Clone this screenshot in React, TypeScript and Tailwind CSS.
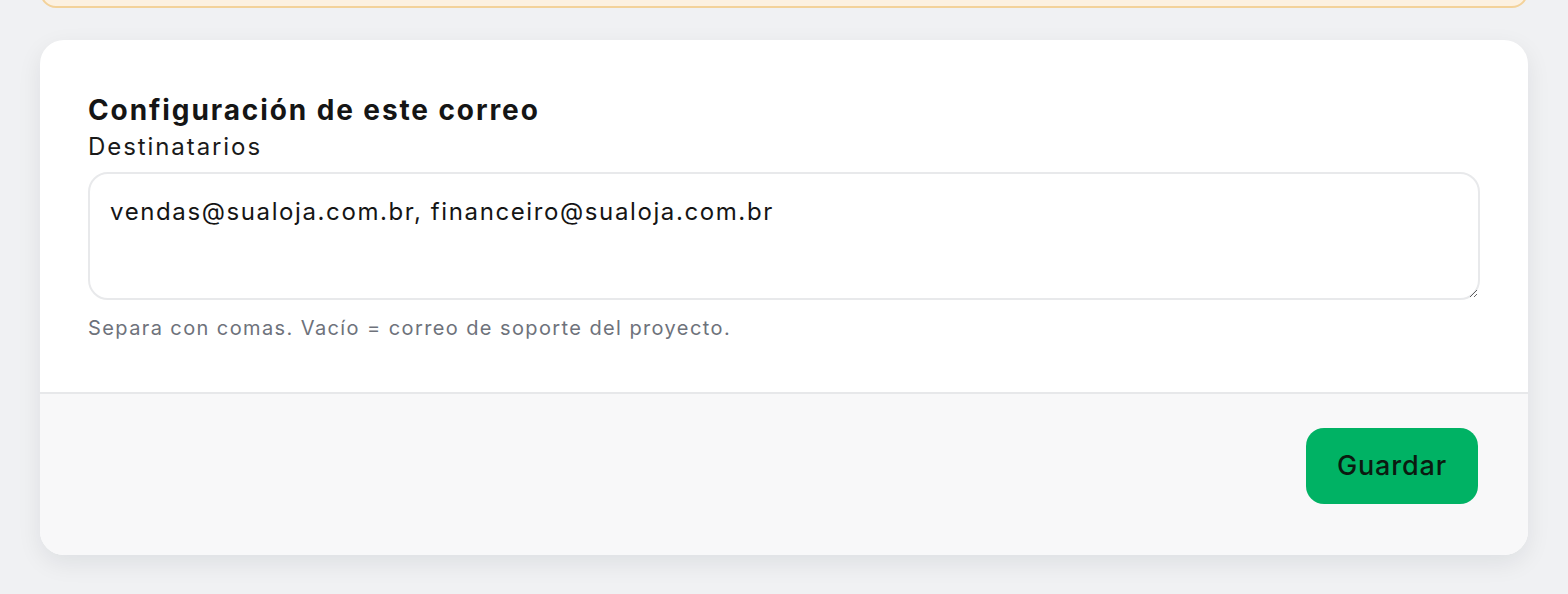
export default function App() {
  return (
    <div
      className="min-h-[594px] bg-[#f0f1f3] px-10 pb-10 overflow-hidden"
      style={{ fontFamily: 'Inter, "Noto Sans", sans-serif' }}
    >
      {/* Notice banner (mostly scrolled out of view) */}
      <div className="-mt-[40px] h-[48px] rounded-2xl border-2 border-[#f3d29a] bg-[#fcf1e1]" />

      {/* Settings card */}
      <div className="mt-8 rounded-[24px] bg-white shadow-[0_8px_24px_rgba(17,24,39,0.08)] overflow-hidden">
        <div className="px-12 pt-[52px] pb-[50px]">
          <h2 className="text-[28px] leading-9 font-bold text-[#151515] tracking-[0.068em]">
            Configuración de este correo
          </h2>
          <label className="block pt-[3px] mb-[9px] text-[24px] leading-8 text-[#1a1a1a] tracking-[0.08em]">
            Destinatarios
          </label>
          <textarea
            className="block w-full h-[128px] rounded-[20px] border-2 border-[#e8e9eb] px-5 py-[20px] text-[24px] leading-[36px] tracking-[0.067em] text-[#151515] outline-none"
            defaultValue="vendas@sualoja.com.br, financeiro@sualoja.com.br"
          />
          <p className="mt-[14px] text-[20px] leading-7 text-[#6e727b] tracking-[0.07em]">
            Separa con comas. Vacío = correo de soporte del proyecto.
          </p>
        </div>

        {/* Footer */}
        <div className="flex justify-end border-t-2 border-[#e7e8ea] bg-[#f8f8f9] pt-[34px] pb-[51px] pr-[50px]">
          <button className="h-[76px] w-[172px] rounded-[18px] bg-[#00b264] text-[27px] font-medium text-[#0b1a10] tracking-[0.03em]">
            Guardar
          </button>
        </div>
      </div>
    </div>
  );
}
